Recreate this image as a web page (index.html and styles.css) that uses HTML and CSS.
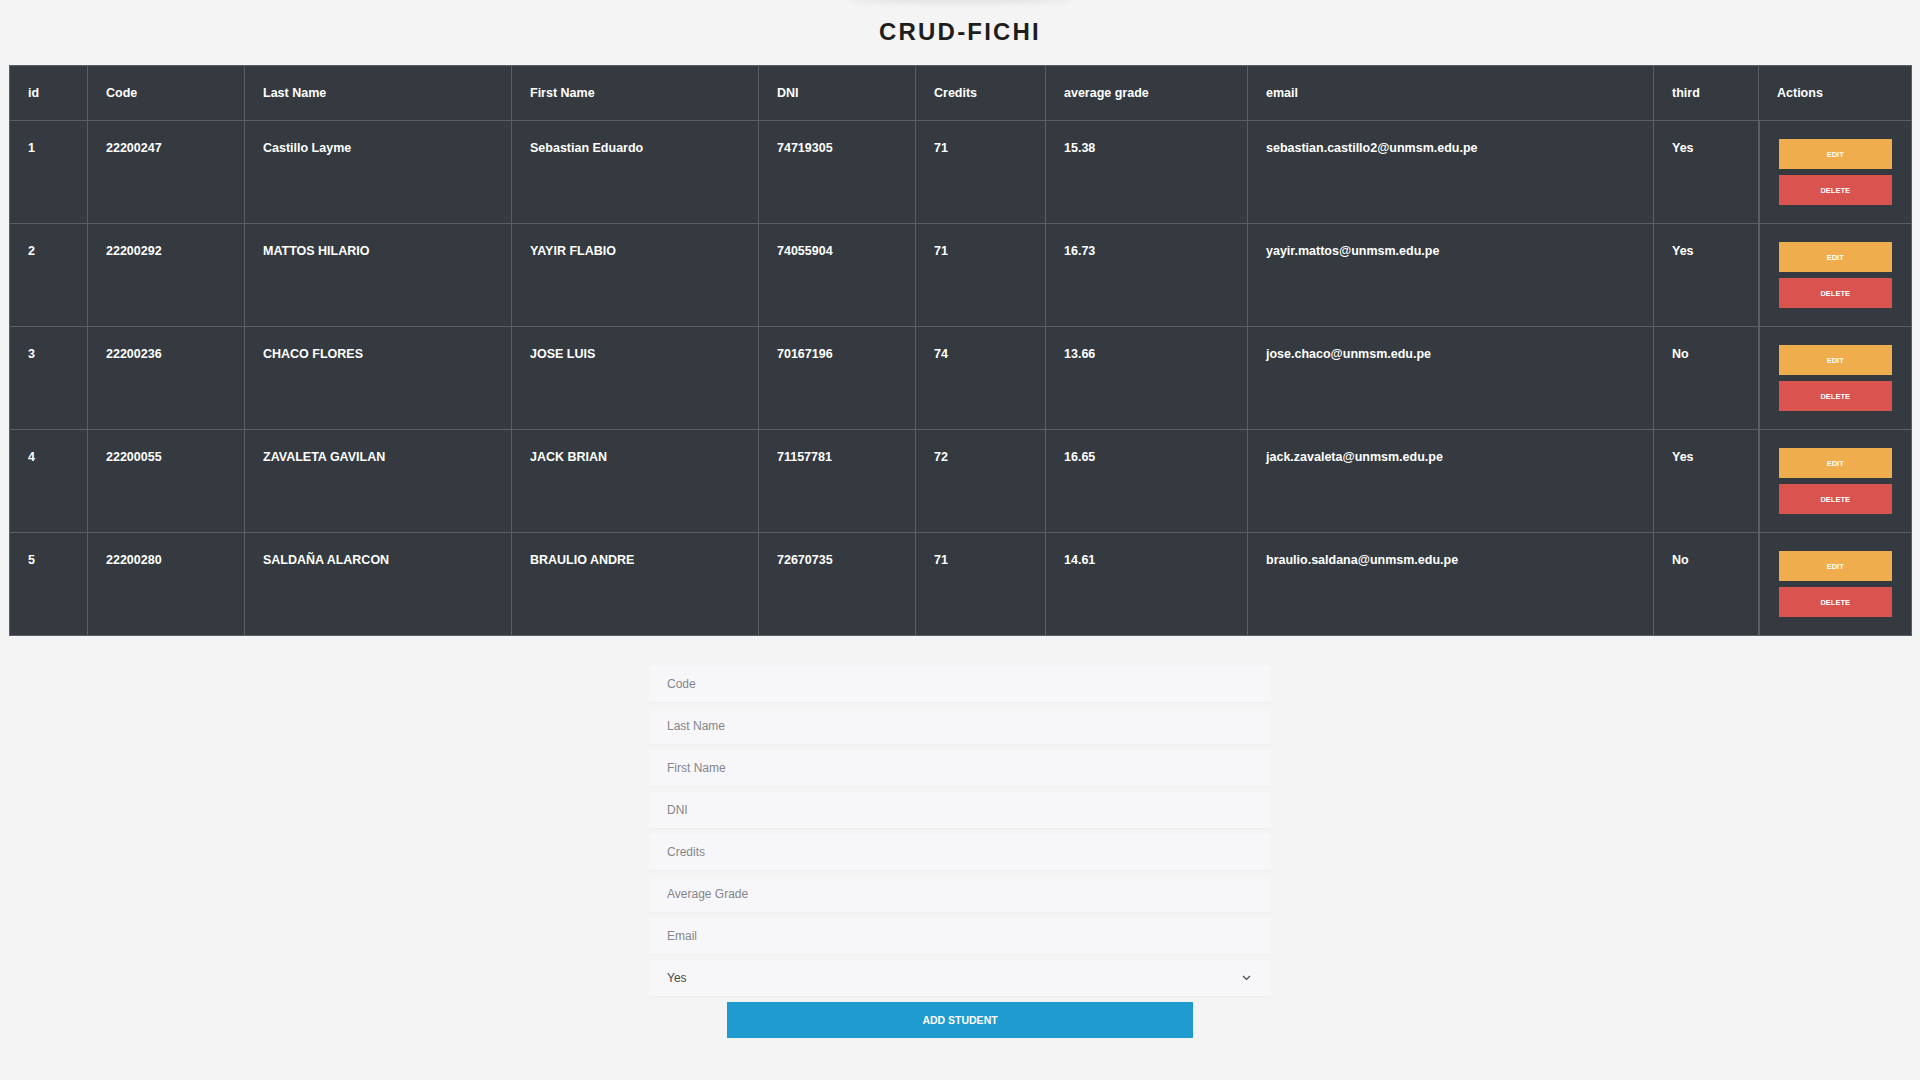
FILE: index.html
```html
<!DOCTYPE html>
<html lang="en">
<head>
<meta charset="utf-8">
<title>CRUD-FICHI</title>
<link rel="stylesheet" href="styles.css">
</head>
<body>
<div class="glow"></div>
<h1 class="title">CRUD-FICHI</h1>
<table class="students">
  <colgroup>
    <col class="c-id"><col class="c-code"><col class="c-last"><col class="c-first"><col class="c-dni"><col class="c-cred"><col class="c-avg"><col class="c-email"><col class="c-third"><col class="c-act">
  </colgroup>
  <thead>
    <tr><th>id</th><th>Code</th><th>Last Name</th><th>First Name</th><th>DNI</th><th>Credits</th><th>average grade</th><th>email</th><th>third</th><th class="act">Actions</th></tr>
  </thead>
  <tbody>
    <tr><td>1</td><td>22200247</td><td>Castillo Layme</td><td>Sebastian Eduardo</td><td>74719305</td><td>71</td><td>15.38</td><td>sebastian.castillo2@unmsm.edu.pe</td><td>Yes</td><td class="act"><button class="btn edit">EDIT</button><button class="btn del">DELETE</button></td></tr>
    <tr><td>2</td><td>22200292</td><td>MATTOS HILARIO</td><td>YAYIR FLABIO</td><td>74055904</td><td>71</td><td>16.73</td><td>yayir.mattos@unmsm.edu.pe</td><td>Yes</td><td class="act"><button class="btn edit">EDIT</button><button class="btn del">DELETE</button></td></tr>
    <tr><td>3</td><td>22200236</td><td>CHACO FLORES</td><td>JOSE LUIS</td><td>70167196</td><td>74</td><td>13.66</td><td>jose.chaco@unmsm.edu.pe</td><td>No</td><td class="act"><button class="btn edit">EDIT</button><button class="btn del">DELETE</button></td></tr>
    <tr><td>4</td><td>22200055</td><td>ZAVALETA GAVILAN</td><td>JACK BRIAN</td><td>71157781</td><td>72</td><td>16.65</td><td>jack.zavaleta@unmsm.edu.pe</td><td>Yes</td><td class="act"><button class="btn edit">EDIT</button><button class="btn del">DELETE</button></td></tr>
    <tr><td>5</td><td>22200280</td><td>SALDAÑA ALARCON</td><td>BRAULIO ANDRE</td><td>72670735</td><td>71</td><td>14.61</td><td>braulio.saldana@unmsm.edu.pe</td><td>No</td><td class="act"><button class="btn edit">EDIT</button><button class="btn del">DELETE</button></td></tr>
  </tbody>
</table>
<form class="form">
  <input class="field" type="text" placeholder="Code">
  <input class="field" type="text" placeholder="Last Name">
  <input class="field" type="text" placeholder="First Name">
  <input class="field" type="text" placeholder="DNI">
  <input class="field" type="text" placeholder="Credits">
  <input class="field" type="text" placeholder="Average Grade">
  <input class="field" type="text" placeholder="Email">
  <div class="select-wrap">
    <select class="field select"><option>Yes</option><option>No</option></select>
    <svg class="chev" width="9" height="6" viewBox="0 0 9 6"><path d="M1 1 L4.5 4.5 L8 1" fill="none" stroke="#444" stroke-width="1.2"/></svg>
  </div>
  <button type="button" class="add">ADD STUDENT</button>
</form>
</body>
</html>
```
FILE: styles.css
```css
* { box-sizing: border-box; }
html, body { margin: 0; padding: 0; }
body {
  background: #f4f4f4;
  font-family: "Liberation Sans", Arial, sans-serif;
  color: #222;
}
.glow {
  width: 226px;
  height: 8px;
  margin: -8px auto 0;
  border-radius: 50%;
  box-shadow: 0 1px 9px rgba(0,0,0,0.12);
}
.title {
  margin: 18px 0 19px;
  text-align: center;
  font-size: 24px;
  line-height: 28px;
  font-weight: bold;
  letter-spacing: 2.2px;
  color: #1e1e1e;
}
.students {
  margin: 0 9px;
  width: 1902px;
  table-layout: fixed;
  border-collapse: collapse;
  background: #343a40;
  color: #fff;
  font-size: 12.5px;
  font-weight: bold;
}
.c-id { width: 78px; }
.c-code { width: 157px; }
.c-last { width: 267px; }
.c-first { width: 247px; }
.c-dni { width: 157px; }
.c-cred { width: 130px; }
.c-avg { width: 202px; }
.c-email { width: 406px; }
.c-third { width: 105px; }
.c-act { width: 153px; }
.students th, .students td {
  border: 1px solid #5b5e62;
  padding: 20px 18px;
  text-align: left;
  vertical-align: top;
  line-height: 14px;
}
.students th { font-weight: bold; }
.students td.act {
  padding: 18px 19px;
  border-left: 2px solid #5b5e62;
}
.btn {
  display: block;
  width: 100%;
  height: 30px;
  border: none;
  padding: 0;
  color: #fff;
  font-family: "Liberation Sans", Arial, sans-serif;
  font-size: 7.5px;
  font-weight: bold;
  cursor: pointer;
}
.btn.edit { background: #f0ad4e; }
.btn.del { background: #d9534f; margin-top: 6px; }
.form {
  width: 622px;
  margin: 30px auto 0;
  display: flex;
  flex-direction: column;
  gap: 6px;
}
.field {
  width: 100%;
  height: 36px;
  border: none;
  outline: none;
  background: #f7f7f9;
  padding: 0 18px;
  font-family: "Liberation Sans", Arial, sans-serif;
  font-size: 12px;
  color: #555;
  box-shadow: 0 1px 1px rgba(0,0,0,0.015);
}
.field::placeholder { color: #85858c; }
.select-wrap { position: relative; }
.select {
  appearance: none;
  -webkit-appearance: none;
  display: block;
  color: #4a4a4a;
}
.chev {
  position: absolute;
  right: 20px;
  top: 15px;
  pointer-events: none;
}
.add {
  align-self: center;
  width: 466px;
  height: 36px;
  border: none;
  background: #1f9bcf;
  color: #fff;
  font-family: "Liberation Sans", Arial, sans-serif;
  font-size: 10.5px;
  font-weight: bold;
  cursor: pointer;
}
```
